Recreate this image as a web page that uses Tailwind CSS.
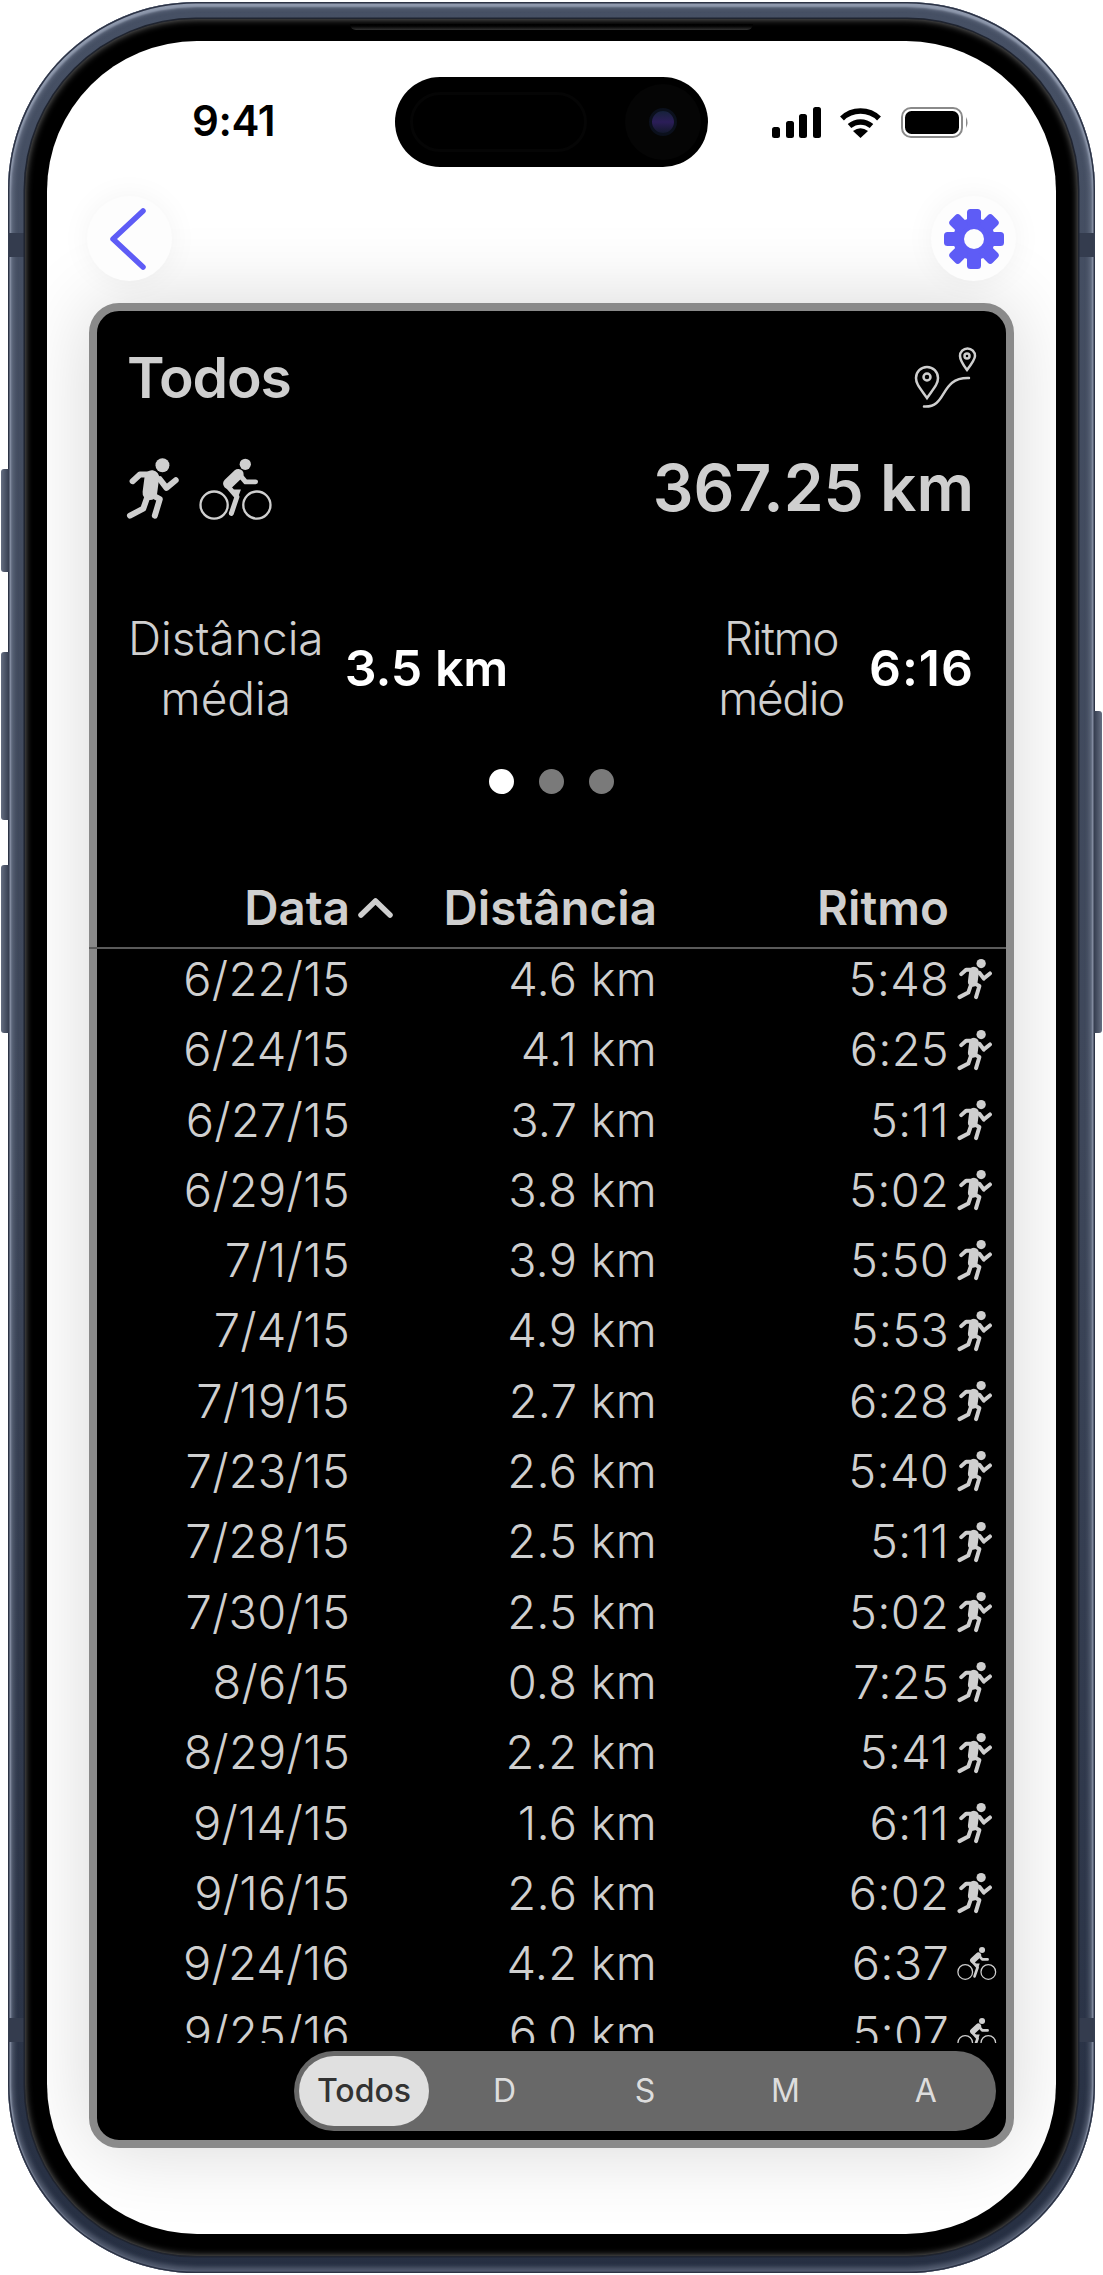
<!DOCTYPE html>
<html lang="pt">
<head>
  <meta charset="UTF-8" />
  <title>Todos</title>
  <script src="https://cdn.jsdelivr.net/npm/@tailwindcss/browser@4"></script>
</head>
<body class="bg-white font-['Inter',sans-serif]">

  <!-- Shared icons -->
  <svg class="absolute w-0 h-0">
    <symbol id="run" viewBox="20 20 165 190">
      <circle cx="128" cy="45" r="21" fill="#cfcfcf"/>
      <path d="M38 93 L60 73 L102 73 M120 87 L140 113 L168 90 M92 132 L120 147 L105 197 M84 136 L70 176 L30 197" fill="none" stroke="#cfcfcf" stroke-width="18" stroke-linecap="round" stroke-linejoin="round"/>
      <path d="M96 82 L90 128" fill="none" stroke="#cfcfcf" stroke-width="44" stroke-linecap="round"/>
    </symbol>
    <symbol id="bike" viewBox="235 20 222 190">
      <circle cx="377" cy="42" r="17" fill="#cfcfcf"/>
      <circle cx="283" cy="165" r="41" fill="none" stroke="#cfcfcf" stroke-width="7"/>
      <circle cx="412" cy="165" r="41" fill="none" stroke="#cfcfcf" stroke-width="7"/>
      <path d="M356 72 L326 100" fill="none" stroke="#cfcfcf" stroke-width="32" stroke-linecap="round"/>
      <path d="M362 76 L378 95 L408 95 M324 108 L352 140 L335 190" fill="none" stroke="#cfcfcf" stroke-width="15" stroke-linecap="round" stroke-linejoin="round"/>
      <path d="M342 118 L364 118 L352 150 Z" fill="#cfcfcf"/>
    </symbol>
  </svg>

  <!-- Phone body -->
  <div class="relative ml-[8px] mt-[2px] w-[1087px] h-[2271px] rounded-[188px] p-[17px] bg-gradient-to-b from-[#465064] via-[#3e475a] to-[#262f42] shadow-[inset_0_0_0_1.5px_#2c3345,inset_0_2px_2px_3px_#8f99ad,inset_0_0_4px_6px_rgba(130,140,160,0.45)]">

    <!-- Side buttons -->
    <div class="absolute -left-[7px] top-[467px] w-[8px] h-[103px] rounded-l-[3px] bg-gradient-to-r from-[#666f82] to-[#353d4f]"></div>
    <div class="absolute -left-[7px] top-[650px] w-[8px] h-[168px] rounded-l-[3px] bg-gradient-to-r from-[#666f82] to-[#353d4f]"></div>
    <div class="absolute -left-[7px] top-[863px] w-[8px] h-[168px] rounded-l-[3px] bg-gradient-to-r from-[#666f82] to-[#353d4f]"></div>
    <div class="absolute -right-[7px] top-[709px] w-[8px] h-[322px] rounded-r-[3px] bg-gradient-to-l from-[#666f82] to-[#353d4f]"></div>

    <!-- Antenna bands -->
    <div class="absolute left-0 top-[231px] w-[17px] h-[24px] bg-[#343c4e]"></div>
    <div class="absolute right-0 top-[231px] w-[17px] h-[24px] bg-[#343c4e]"></div>
    <div class="absolute left-0 top-[2016px] w-[17px] h-[24px] bg-[#343c4e]"></div>
    <div class="absolute right-0 top-[2016px] w-[17px] h-[24px] bg-[#343c4e]"></div>

    <!-- Black bezel -->
    <div class="relative w-full h-full rounded-[171px] bg-black p-[22px] shadow-[0_0_0_1.5px_#1f2430,inset_0_0_7px_#777]">
      <div class="absolute left-[325px] top-[5px] w-[403px] h-[6px] rounded-b-full bg-gradient-to-b from-black to-[#333]"></div>

      <!-- Screen -->
      <div class="relative w-full h-full rounded-[150px] overflow-hidden bg-white">

        <!-- Status bar -->
        <div class="flex items-center pt-[36px] h-[126px]">
          <div class="w-[348px] pl-[145px] text-[42px] leading-[40px] font-semibold text-black tracking-[-0.01em] -mt-[3px]">9:41</div>
          <div class="w-[313px] h-[90px] rounded-full bg-black flex items-center justify-between pl-[15px] pr-[7px]">
            <div class="w-[177px] h-[60px] rounded-full border-[3px] border-[#050505]"></div>
            <div class="w-[76px] h-[76px] rounded-full bg-[#050505] flex items-center justify-center">
              <div class="w-[28px] h-[28px] rounded-full bg-gradient-to-b from-[#16213a] via-[#2b1d58] to-[#13182c] border-[3px] border-[#0b101c]"></div>
            </div>
          </div>
          <div class="flex items-center pl-[64px]">
            <svg width="49" height="31" viewBox="0 0 49 31" fill="#000">
              <rect x="0" y="20" width="8" height="11" rx="2.5"/>
              <rect x="14" y="14" width="8" height="17" rx="2.5"/>
              <rect x="27" y="7" width="8" height="24" rx="2.5"/>
              <rect x="41" y="0" width="8" height="31" rx="2.5"/>
            </svg>
            <svg class="ml-[18px]" width="43" height="31" viewBox="0 0 43 31">
              <path d="M3 11.5 C13 1.5 30 1.5 40 11.5 M10.5 19 C17 13.5 26 13.5 32.500 19" fill="none" stroke="#000" stroke-width="5.500" stroke-linejoin="round"/>
              <path d="M14 24 Q21.500 18.500 29 24 L21.500 31 Z" fill="#000"/>
            </svg>
            <svg class="ml-[19px]" width="68" height="31" viewBox="0 0 68 31">
              <rect x="1" y="1" width="60" height="29" rx="9" fill="none" stroke="#8a8a8a" stroke-width="2"/>
              <rect x="4" y="4" width="54" height="23" rx="6.500" fill="#000"/>
              <path d="M65 10 Q68 15.500 65 21 Z" fill="#8a8a8a"/>
            </svg>
          </div>
        </div>

        <!-- Nav buttons -->
        <div class="flex justify-between px-[40px] mt-[29px]">
          <div class="w-[85px] h-[85px] rounded-full bg-[#fdfdfd] shadow-[0_0_30px_rgba(0,0,0,0.05)] flex items-center justify-center">
            <svg width="38" height="62" viewBox="0 0 38 62" class="-ml-[3px]">
              <path d="M34 3 L4 31 L34 59" fill="none" stroke="#5e5cf6" stroke-width="5.500" stroke-linecap="round" stroke-linejoin="round"/>
            </svg>
          </div>
          <div class="w-[85px] h-[85px] rounded-full bg-[#fdfdfd] shadow-[0_0_30px_rgba(0,0,0,0.05)] flex items-center justify-center">
            <svg width="60" height="60" viewBox="-30 -30 60 60" fill="#5e5cf6">
              <circle r="21"/>
              <rect x="-7" y="-30" width="14" height="16" rx="3.500"/>
              <rect x="-7" y="-30" width="14" height="16" rx="3.500" transform="rotate(45)"/>
              <rect x="-7" y="-30" width="14" height="16" rx="3.500" transform="rotate(90)"/>
              <rect x="-7" y="-30" width="14" height="16" rx="3.500" transform="rotate(135)"/>
              <rect x="-7" y="-30" width="14" height="16" rx="3.500" transform="rotate(180)"/>
              <rect x="-7" y="-30" width="14" height="16" rx="3.500" transform="rotate(225)"/>
              <rect x="-7" y="-30" width="14" height="16" rx="3.500" transform="rotate(270)"/>
              <rect x="-7" y="-30" width="14" height="16" rx="3.500" transform="rotate(315)"/>
              <circle r="10" fill="#fdfdfd"/>
            </svg>
          </div>
        </div>

        <!-- Card -->
        <div class="ml-[42px] mr-[42px] mt-[22px] h-[1845px] rounded-[30px] border-[8px] border-[#8a8a8a] bg-black shadow-[0_0_80px_rgba(0,0,0,0.16)]">

          <!-- Title -->
          <div class="flex items-center justify-between h-[74px] mt-[30px] pl-[30px] pr-[31px]">
            <div class="text-[57px] leading-[74px] font-semibold text-[#cfcfcf] tracking-[-0.02em]">Todos</div>
            <svg width="65" height="64" viewBox="13 10 65 64" fill="none" stroke="#cfcfcf" stroke-width="2.500" class="-mr-[3px]">
              <path d="M27 62 C20 52 16 48 16 42 A11 11 0 0 1 38 42 C38 48 34 52 27 62 Z"/>
              <circle cx="27" cy="41" r="3.500"/>
              <path d="M67 34 C61 26 60 23 60 20 A7.500 7.500 0 0 1 75 20 C75 23 73 26 67 34 Z"/>
              <circle cx="67" cy="20" r="2.500"/>
              <path d="M24 70.500 C48 72 39 41 69 42" stroke-linecap="round"/>
            </svg>
          </div>

          <!-- Sports and total -->
          <div class="flex items-center justify-between h-[80px] mt-[33px] pl-[29px] pr-[32px]">
            <div class="flex items-center gap-[16px]">
              <svg width="56" height="63"><use href="#run"/></svg>
              <svg width="74" height="63"><use href="#bike"/></svg>
            </div>
            <div class="text-[64px] leading-[80px] font-semibold text-[#cfcfcf]">367.25 km</div>
          </div>

          <!-- Averages -->
          <div class="flex items-center justify-between h-[136px] mt-[72px] pl-[31px] pr-[32px]">
            <div class="flex items-center gap-[21px]">
              <div class="text-[46px] leading-[60px] font-light text-[#cfcfcf] text-center">Distância<br>média</div>
              <div class="text-[50px] leading-[60px] font-semibold text-white">3.5 km</div>
            </div>
            <div class="flex items-center gap-[25px]">
              <div class="text-[46px] leading-[60px] font-light text-[#cfcfcf] text-center tracking-[-0.03em]">Ritmo<br>médio</div>
              <div class="text-[50px] leading-[60px] font-semibold text-white tracking-[0.02em]">6:16</div>
            </div>
          </div>

          <!-- Page dots -->
          <div class="flex justify-center gap-[25px] mt-[33px]">
            <div class="w-[25px] h-[25px] rounded-full bg-white"></div>
            <div class="w-[25px] h-[25px] rounded-full bg-[#7a7a7a]"></div>
            <div class="w-[25px] h-[25px] rounded-full bg-[#7a7a7a]"></div>
          </div>

          <!-- Table header -->
          <div class="grid grid-cols-[253px_55px_252px_292px] items-center h-[60px] mt-[84px] text-[47.5px] leading-[60px] font-semibold text-[#cfcfcf] text-right">
            <div>Data</div>
            <svg width="35" height="20" viewBox="0 0 35 20" class="ml-[8px]">
              <path d="M3 17 L17.500 3 L32 17" fill="none" stroke="#cfcfcf" stroke-width="5.500" stroke-linecap="round" stroke-linejoin="round"/>
            </svg>
            <div>Distância</div>
            <div>Ritmo</div>
          </div>
          <div class="h-[2px] mt-[9px] -ml-[8px] bg-[#5a5a5a]"></div>

          <!-- Table rows, filled below -->
          <div id="rows" class="h-[1099px] -mt-[5px] overflow-hidden"></div>

          <!-- Range picker -->
          <div class="grid grid-cols-5 items-center w-[702px] h-[80px] ml-[197px] mt-[8px] rounded-full bg-[#686868] text-[32px] text-[#dddddd]">
            <div class="w-[130px] h-[70px] ml-[5px] rounded-full bg-[#e0e0e0] text-[#333333] font-medium flex items-center justify-center">Todos</div>
            <div class="text-center">D</div>
            <div class="text-center">S</div>
            <div class="text-center">M</div>
            <div class="text-center">A</div>
          </div>
        </div>
      </div>
    </div>
  </div>

  <script>
    const runs = [
      ["6/22/15", "4.6 km", "5:48", "run"],
      ["6/24/15", "4.1 km", "6:25", "run"],
      ["6/27/15", "3.7 km", "5:11", "run"],
      ["6/29/15", "3.8 km", "5:02", "run"],
      ["7/1/15", "3.9 km", "5:50", "run"],
      ["7/4/15", "4.9 km", "5:53", "run"],
      ["7/19/15", "2.7 km", "6:28", "run"],
      ["7/23/15", "2.6 km", "5:40", "run"],
      ["7/28/15", "2.5 km", "5:11", "run"],
      ["7/30/15", "2.5 km", "5:02", "run"],
      ["8/6/15", "0.8 km", "7:25", "run"],
      ["8/29/15", "2.2 km", "5:41", "run"],
      ["9/14/15", "1.6 km", "6:11", "run"],
      ["9/16/15", "2.6 km", "6:02", "run"],
      ["9/24/16", "4.2 km", "6:37", "bike"],
      ["9/25/16", "6.0 km", "5:07", "bike"],
    ];

    const rows = document.getElementById("rows");
    runs.forEach(([date, dist, pace, sport]) => {
      const icon = sport === "run"
        ? `<svg width="37" height="42" class="ml-[8px]"><use href="#run"/></svg>`
        : `<svg width="41" height="34" class="ml-[7px]"><use href="#bike"/></svg>`;
      rows.innerHTML += `
        <div class="grid grid-cols-[253px_307px_292px_57px] items-center h-[70.3px] text-[47px] font-[350] text-[#cfcfcf] text-right tracking-[0.005em]">
          <div>${date}</div>
          <div>${dist}</div>
          <div>${pace}</div>
          ${icon}
        </div>`;
    });
  </script>
</body>
</html>
